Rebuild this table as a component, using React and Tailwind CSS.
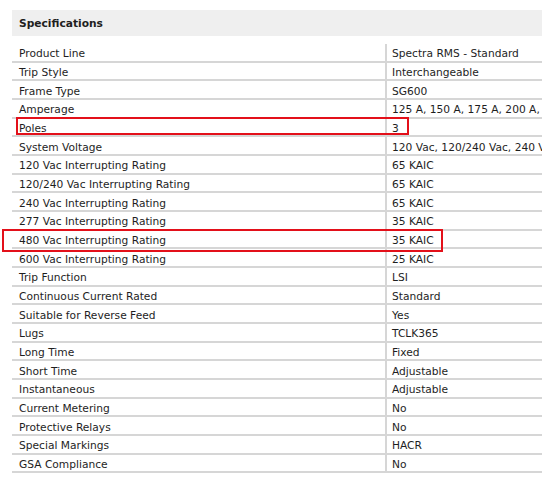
const specs = [
  ['Product Line', 'Spectra RMS - Standard'],
  ['Trip Style', 'Interchangeable'],
  ['Frame Type', 'SG600'],
  ['Amperage', '125 A, 150 A, 175 A, 200 A, 225 A, 250 A, 300 A'],
  ['Poles', '3'],
  ['System Voltage', '120 Vac, 120/240 Vac, 240 Vac, 277 Vac, 480 Vac, 600 Vac'],
  ['120 Vac Interrupting Rating', '65 KAIC'],
  ['120/240 Vac Interrupting Rating', '65 KAIC'],
  ['240 Vac Interrupting Rating', '65 KAIC'],
  ['277 Vac Interrupting Rating', '35 KAIC'],
  ['480 Vac Interrupting Rating', '35 KAIC'],
  ['600 Vac Interrupting Rating', '25 KAIC'],
  ['Trip Function', 'LSI'],
  ['Continuous Current Rated', 'Standard'],
  ['Suitable for Reverse Feed', 'Yes'],
  ['Lugs', 'TCLK365'],
  ['Long Time', 'Fixed'],
  ['Short Time', 'Adjustable'],
  ['Instantaneous', 'Adjustable'],
  ['Current Metering', 'No'],
  ['Protective Relays', 'No'],
  ['Special Markings', 'HACR'],
  ['GSA Compliance', 'No'],
];

export default function App() {
  return (
    <div
      className="relative w-[542px] h-[487px] overflow-hidden bg-white text-[#1e1e1e] text-[10.67px]"
      style={{ fontFamily: '"DejaVu Sans", Verdana, sans-serif' }}
    >
      <div className="pt-[10px] pl-[12px]">
        {/* Section header */}
        <div className="h-[26px] w-[700px] bg-[#efefef] flex items-center pl-[7px] pt-[1px] font-bold">
          Specifications
        </div>

        {/* Spec table (runs past the right edge, as in the page) */}
        <div className="mt-[8px] w-[700px]">
          {specs.map(([label, value]) => (
            <div
              key={label}
              className="flex h-[18.68px] border-b-2 border-[#d6d6d6] box-border"
            >
              <div className="w-[373px] shrink-0 pl-[7px] pt-[4px] flex items-center whitespace-nowrap">
                {label}
              </div>
              <div className="flex-1 border-l-2 border-[#d6d6d6] pl-[5px] pt-[4px] flex items-center whitespace-nowrap">
                {value}
              </div>
            </div>
          ))}
        </div>
      </div>

      {/* Highlight boxes */}
      <div className="absolute left-[16px] top-[117px] w-[393px] h-[18px] border-2 border-[#e3101a]" />
      <div className="absolute left-[2px] top-[229px] w-[441px] h-[23px] border-2 border-[#e3101a]" />
    </div>
  );
}
